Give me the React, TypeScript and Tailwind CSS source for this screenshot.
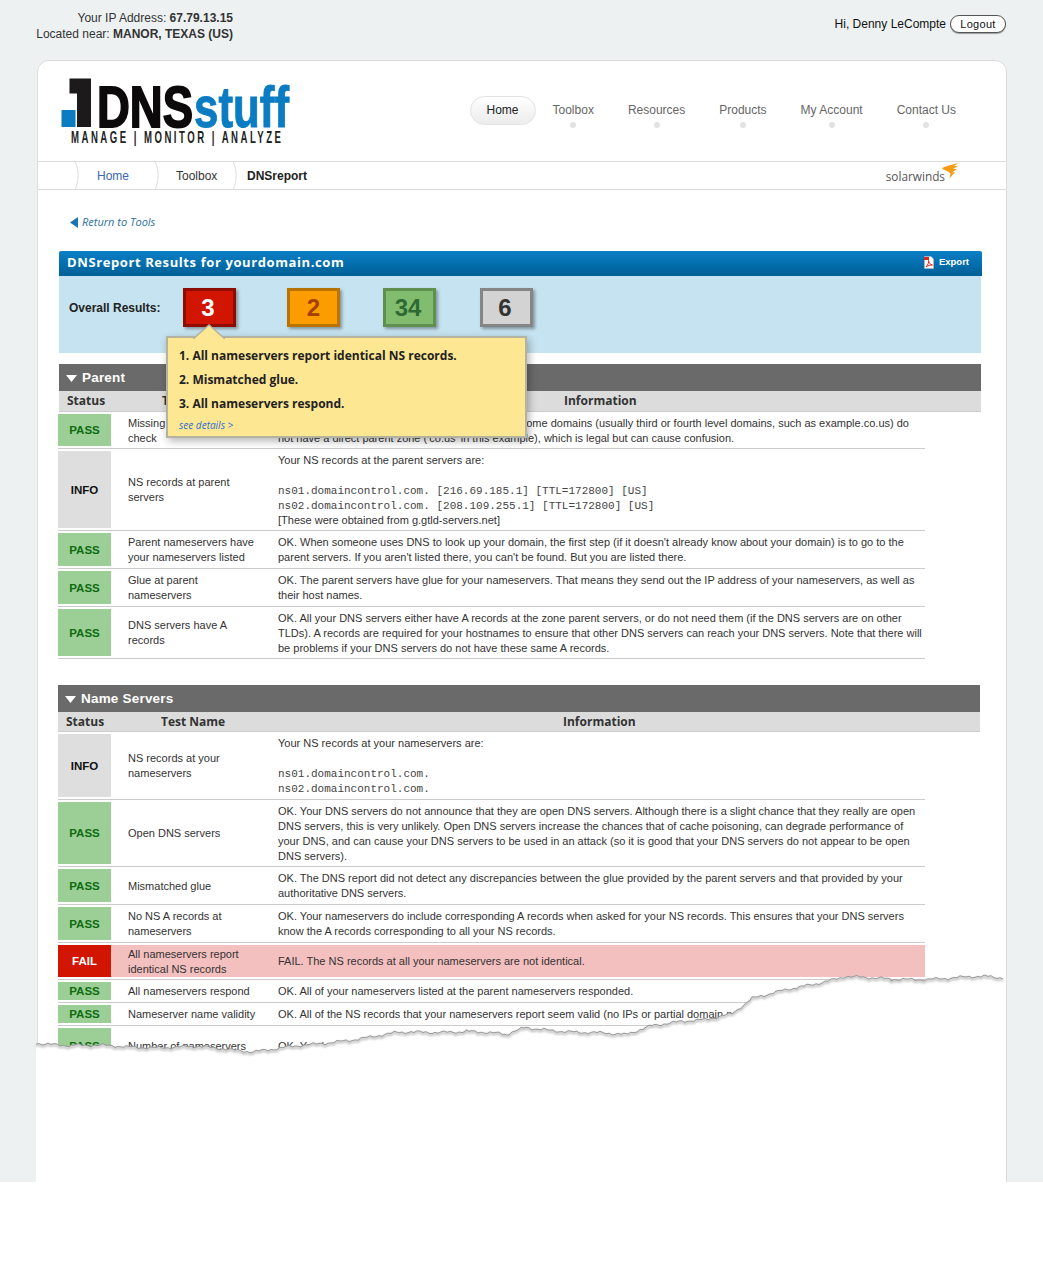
import React from "react";

type R = { s: "PASS" | "INFO" | "FAIL"; h: string; name: string[]; info: React.ReactNode };

const L = () => <div className="whitespace-pre">&nbsp;</div>;
const M = ({ children }: { children: React.ReactNode }) => (
  <div className="-mb-px pt-px font-['Liberation_Mono',monospace] text-[11px] leading-[15px] text-[#444] whitespace-pre">{children}</div>
);
const T = ({ children }: { children: React.ReactNode }) => <div className="whitespace-pre">{children}</div>;

const parent: R[] = [
  { s: "PASS", h: "h-[37px]", name: ["Missing nameservers", "check"], info: <><T>OK. Your name servers are listed at parent zone. Some domains (usually third or fourth level domains, such as example.co.us) do</T><T>not have a direct parent zone ('co.us' in this example), which is legal but can cause confusion.</T></> },
  { s: "INFO", h: "h-[82px]", name: ["NS records at parent", "servers"], info: <><T>Your NS records at the parent servers are:</T><L /><M>ns01.domaincontrol.com. [216.69.185.1] [TTL=172800] [US]</M><M>ns02.domaincontrol.com. [208.109.255.1] [TTL=172800] [US]</M><T>[These were obtained from g.gtld-servers.net]</T></> },
  { s: "PASS", h: "h-[38px]", name: ["Parent nameservers have", "your nameservers listed"], info: <><T>OK. When someone uses DNS to look up your domain, the first step (if it doesn't already know about your domain) is to go to the</T><T>parent servers. If you aren't listed there, you can't be found. But you are listed there.</T></> },
  { s: "PASS", h: "h-[38px]", name: ["Glue at parent", "nameservers"], info: <><T>OK. The parent servers have glue for your nameservers. That means they send out the IP address of your nameservers, as well as</T><T>their host names.</T></> },
  { s: "PASS", h: "h-[52px]", name: ["DNS servers have A", "records"], info: <><T>OK. All your DNS servers either have A records at the zone parent servers, or do not need them (if the DNS servers are on other</T><T>TLDs). A records are required for your hostnames to ensure that other DNS servers can reach your DNS servers. Note that there will</T><T>be problems if your DNS servers do not have these same A records.</T></> },
];

const names: R[] = [
  { s: "INFO", h: "h-[68px]", name: ["NS records at your", "nameservers"], info: <><T>Your NS records at your nameservers are:</T><L /><M>ns01.domaincontrol.com.</M><M>ns02.domaincontrol.com.</M></> },
  { s: "PASS", h: "h-[67px]", name: ["Open DNS servers"], info: <><T>OK. Your DNS servers do not announce that they are open DNS servers. Although there is a slight chance that they really are open</T><T>DNS servers, this is very unlikely. Open DNS servers increase the chances that of cache poisoning, can degrade performance of</T><T>your DNS, and can cause your DNS servers to be used in an attack (so it is good that your DNS servers do not appear to be open</T><T>DNS servers).</T></> },
  { s: "PASS", h: "h-[38px]", name: ["Mismatched glue"], info: <><T>OK. The DNS report did not detect any discrepancies between the glue provided by the parent servers and that provided by your</T><T>authoritative DNS servers.</T></> },
  { s: "PASS", h: "h-[38px]", name: ["No NS A records at", "nameservers"], info: <><T>OK. Your nameservers do include corresponding A records when asked for your NS records. This ensures that your DNS servers</T><T>know the A records corresponding to all your NS records.</T></> },
  { s: "FAIL", h: "h-[37px]", name: ["All nameservers report", "identical NS records"], info: <T>FAIL. The NS records at all your nameservers are not identical.</T> },
  { s: "PASS", h: "h-[23px]", name: ["All nameservers respond"], info: <T>OK. All of your nameservers listed at the parent nameservers responded.</T> },
  { s: "PASS", h: "h-[23px]", name: ["Nameserver name validity"], info: <T>OK. All of the NS records that your nameservers report seem valid (no IPs or partial domain names).</T> },
  { s: "PASS", h: "h-[40px]", name: ["Number of nameservers"], info: <T>OK. You have 2 nameservers. According to RFC2182 you need at least 2.</T> },
];

function Row({ r }: { r: R }) {
  const st =
    r.s === "PASS" ? "bg-[#9bcf95] text-[#0f6b12]" : r.s === "INFO" ? "bg-[#dedede] text-[#111]" : "bg-[#d21500] text-white";
  return (
    <div className={"w-[867px] border-b border-[#ccc] py-[2px] " + r.h}>
      <div className={"flex h-full items-center text-[11px] leading-[15px] text-[#333] " + (r.s === "FAIL" ? "bg-[#f3bfbf]" : "")}>
        <div className={"flex h-full w-[53px] shrink-0 items-center justify-center pt-px text-[11.500px] font-bold " + st}>{r.s}</div>
        <div className="w-[167px] shrink-0 pl-[17px] pt-px">
          {r.name.map((n) => (
            <div key={n} className="whitespace-pre">{n}</div>
          ))}
        </div>
        <div className="pt-px">{r.info}</div>
      </div>
    </div>
  );
}

function SectionHead({ title, offset, colH }: { title: string; offset: string; colH: string }) {
  return (
    <div className={offset}>
      <div className="flex h-[27px] w-[922px] items-center gap-[5px] bg-[#6a6a6a] pl-[7px] pt-px text-[13.500px] font-bold tracking-[0.2px] text-white">
        <svg width="11" height="7" viewBox="0 0 11 7"><path d="M0 0H11L5.500 7Z" fill="#fff" /></svg>
        {title}
      </div>
      <div className={"flex w-[922px] items-center border-b border-[#ccc] bg-[#dcdcdc] font-['Open_Sans',sans-serif] text-[12px] font-bold text-[#333] " + colH}>
        <div className="w-[103px] pl-[8px]">Status</div>
        <div className="w-[402px]">Test Name</div>
        <div>Information</div>
      </div>
    </div>
  );
}

function Score({ n, label, c, ml }: { n: string; label: string; c: string; ml: string }) {
  return (
    <div className={"w-[53px] " + ml}>
      <div className={"flex h-[39px] w-[53px] items-center justify-center border-[3px] text-[24px] font-bold shadow-[2px_2px_3px_rgba(0,0,0,0.35)] " + c}>{n}</div>
      <div className="mt-[6px] text-center text-[10px] text-[#555]">{label}</div>
    </div>
  );
}

function Logo() {
  return (
    <svg width="240" height="80" viewBox="0 0 240 80" className="block">
      <path d="M10.500 8.500H32V57H18V23.500H10.500Z" fill="#1d1a1b" />
      <rect x="2.500" y="40" width="14" height="17" fill="#0b7cc2" />
      <text x="38" y="57" textLength="96" lengthAdjust="spacingAndGlyphs" fontFamily="'Liberation Sans',sans-serif" fontWeight="700" fontSize="58" fill="#0c0a0b" stroke="#0c0a0b" strokeWidth="1.800">DNS</text>
      <text x="135" y="57" textLength="95" lengthAdjust="spacingAndGlyphs" fontFamily="'Liberation Sans',sans-serif" fontWeight="700" fontSize="58" fill="#0b7cc2" stroke="#0b7cc2" strokeWidth="1">stuff</text>
      <g transform="translate(12 73) scale(0.6 1)">
        <text x="0" y="0" textLength="350" lengthAdjust="spacing" fontFamily="'Liberation Sans',sans-serif" fontWeight="700" fontSize="16" fill="#222">MANAGE | MONITOR | ANALYZE</text>
      </g>
    </svg>
  );
}

const Sep = ({ c }: { c: string }) => (
  <svg width="4" height="27" viewBox="0 0 4 27" className={"shrink-0 " + c}>
    <path d="M0.500 0Q6 13.500 0.500 27" fill="none" stroke="#ddd" />
  </svg>
);

function Tear() {
  const pts: [number, number][] = [[36, 1043], [73, 1045], [126, 1047], [193, 1047], [253, 1051], [313, 1045], [346, 1040], [399, 1033], [466, 1031], [506, 1035], [526, 1027], [579, 1033], [625, 1034], [652, 1025], [705, 1020], [732, 1013], [752, 998], [798, 988], [845, 976], [891, 980], [945, 978], [985, 977], [1006, 978]];
  const line: string[] = [];
  let k = 0;
  for (let i = 0; i < pts.length - 1; i++) {
    const [x0, y0] = pts[i];
    const [x1, y1] = pts[i + 1];
    for (let x = x0; x < x1; x += 3) {
      const t = (x - x0) / (x1 - x0);
      k++;
      const j = Math.sin(k * 2.3) * 0.8 + Math.sin(k * 0.71) * 0.9 + Math.sin(k * 0.19) * 0.8;
      line.push(`${x} ${(y0 + (y1 - y0) * t + j).toFixed(1)}`);
    }
  }
  const d = "M" + line.join("L");
  return (
    <svg width="1043" height="1182" viewBox="0 0 1043 1182" className="pointer-events-none absolute left-0 top-0">
      <defs>
        <filter id="b" x="-5%" y="-50%" width="110%" height="200%"><feGaussianBlur stdDeviation="1.200" /></filter>
      </defs>
      <path d={d + "L1006 1182L36 1182Z"} fill="#fff" />
      <path d={d} transform="translate(0 1.5)" fill="none" stroke="#bbb" strokeWidth="2" filter="url(#b)" />
      <path d={d} fill="none" stroke="#8f8f8f" strokeWidth="0.9" />
    </svg>
  );
}

export default function App() {
  const nav = ["Toolbox", "Resources", "Products", "My Account", "Contact Us"];
  return (
    <div className="h-[1282px] bg-white font-['Liberation_Sans',Arial,sans-serif] text-[12px] text-[#333]">
      <div className="relative h-[1182px] overflow-hidden bg-[#edf1f2]">
        {/* top strip */}
        <div className="flex h-[60px] items-start justify-between">
          <div className="w-[233px] pt-[10px] text-right leading-[16px] text-[#333]">
            <div>Your IP Address: <b>67.79.13.15</b></div>
            <div>Located near: <b>MANOR, TEXAS (US)</b></div>
          </div>
          <div className="mr-[37px] mt-[15px] flex items-center gap-[4px] text-[#111]">
            <span>Hi, Denny LeCompte</span>
            <span className="flex h-[18px] w-[56px] items-center justify-center rounded-full border border-[#555] bg-white text-[11px] tracking-[0.3px] shadow-[0_1px_1px_rgba(0,0,0,0.35)]">Logout</span>
          </div>
        </div>

        {/* card */}
        <div className="ml-[37px] h-[1200px] w-[970px] rounded-t-[12px] border border-[#dcdcdc] bg-white">
          <div className="flex h-[100px] items-start justify-between">
            <div className="pl-[21px] pt-[9px]"><Logo /></div>
            <div className="flex pr-[33px] pt-[35px]">
              <div className="flex h-[29px] items-center rounded-full border border-[#e3e3e3] bg-gradient-to-b from-white to-[#ececec] px-[16px] pb-[2px] text-[#222]">Home</div>
              {nav.map((n) => (
                <div key={n} className="flex flex-col items-center px-[17px] text-[#666]">
                  <div className="flex h-[29px] items-center pb-[2px]">{n}</div>
                  <div className="-mt-[3px] h-[6px] w-[6px] rounded-full bg-[#e2e2e2]" />
                </div>
              ))}
            </div>
          </div>

          <div className="flex h-[29px] items-center border-y border-[#dcdcdc]">
            <Sep c="ml-[37px]" />
            <span className="ml-[18px] w-[58px] text-[#3b66b0]">Home</span>
            <Sep c="" />
            <span className="ml-[17px] w-[57px] text-[#333]">Toolbox</span>
            <Sep c="" />
            <span className="ml-[10px] font-bold text-[#222]">DNSreport</span>
            <div className="relative ml-auto mr-[61px] flex h-full items-center">
              <span className="mt-[2px] font-['Open_Sans',sans-serif] text-[11.800px] text-[#555]">solarwinds</span>
              <svg width="17" height="16" viewBox="0 0 17 16" className="absolute -right-[14px] top-[1px]">
                <path d="M0 5L5 3L16.500 0L12 3L16 3L11 6L15 6L10 9.500L13 9L7.500 15.500L8.500 10.500L6 8.500L1.500 6.500Z" fill="#f59c12" />
              </svg>
            </div>
          </div>

          <div className="pl-[20px]">
            <div className="ml-[12px] mt-[25px] flex h-[15px] items-center gap-[4px] font-['Open_Sans',sans-serif] text-[11px] italic text-[#2b6f9f]">
              <svg width="8" height="11" viewBox="0 0 8 11"><path d="M8 0V11L0 5.500Z" fill="#1b75b0" /></svg>
              Return to Tools
            </div>

            {/* results */}
            <div className="ml-px mt-[21px] w-[923px]">
              <div className="flex h-[25px] items-center justify-between rounded-t-[2px] bg-gradient-to-b from-[#0a80c6] to-[#005f96] pb-[2px] pl-[8px] pr-[13px] text-white">
                <span className="font-['Open_Sans',sans-serif] text-[13px] font-bold tracking-[0.6px]">DNSreport Results for yourdomain.com</span>
                <span className="flex items-center gap-[5px] pl-px text-[9.500px] font-bold">
                  <svg width="10" height="13" viewBox="0 0 10 13">
                    <path d="M0.500 0.500H7L9.500 3V12.500H0.500Z" fill="#fff" stroke="#bbb" strokeWidth="0.5" />
                    <rect x="0" y="1" width="5" height="3" fill="#d8281e" />
                    <path d="M2 11C4 9 5 6 4.500 4.500C5 7 6 8.500 8.500 9C6 9 4 9.500 2 11Z" fill="none" stroke="#d8281e" />
                  </svg>
                  Export
                </span>
              </div>
              <div className="relative h-[77px] w-[922px] bg-[#c6e3f1]">
                <div className="flex pl-[10px] pt-[12px]">
                  <div className="flex h-[39px] w-[114px] items-center text-[12px] font-bold text-[#222]">Overall Results:</div>
                  <Score n="3" label="FAILURES" ml="" c="border-[#8d0d00] bg-[#d21500] pr-[3px] text-white" />
                  <Score n="2" label="WARNINGS" ml="ml-[51px]" c="border-[#b97300] bg-[#fb9c00] text-[#a33f00]" />
                  <Score n="34" label="PASS" ml="ml-[43px]" c="border-[#5f9050] bg-[#82bd6f] pr-[3px] text-[#2f6a33]" />
                  <Score n="6" label="INFO" ml="ml-[44px]" c="border-[#858585] bg-[#d3d3d3] pr-[3px] text-[#333]" />
                </div>
              </div>
            </div>

            <div className="h-[11px]" />
            <SectionHead title="Parent" offset="ml-px" colH="h-[21px]" />
            {parent.map((r, i) => <Row key={i} r={r} />)}

            <div className="h-[26px]" />
            <SectionHead title="Name Servers" offset="" colH="h-[20px]" />
            {names.map((r, i) => <Row key={i} r={r} />)}
          </div>
        </div>

        {/* popover */}
        <div className="absolute left-[166px] top-[336px] z-10 h-[102px] w-[361px] border-2 border-[#b3b3a0] bg-[#fee792] pl-[11px] pt-[6px] font-['Open_Sans',sans-serif] text-[12px] font-bold leading-[24px] text-[#222] shadow-[2px_3px_8px_rgba(0,0,0,0.3)]">
          <svg width="32" height="15" viewBox="0 0 32 15" className="absolute left-[25px] -top-[14px]">
            <path d="M0 15L16 1L32 15" fill="#fee792" stroke="#b3b3a0" strokeWidth="1.500" />
          </svg>
          <div>1. All nameservers report identical NS records.</div>
          <div>2. Mismatched glue.</div>
          <div>3. All nameservers respond.</div>
          <div className="text-[10px] font-normal italic leading-[18px] text-[#2f6fd0]">see details &gt;</div>
        </div>

        <Tear />
      </div>
    </div>
  );
}
